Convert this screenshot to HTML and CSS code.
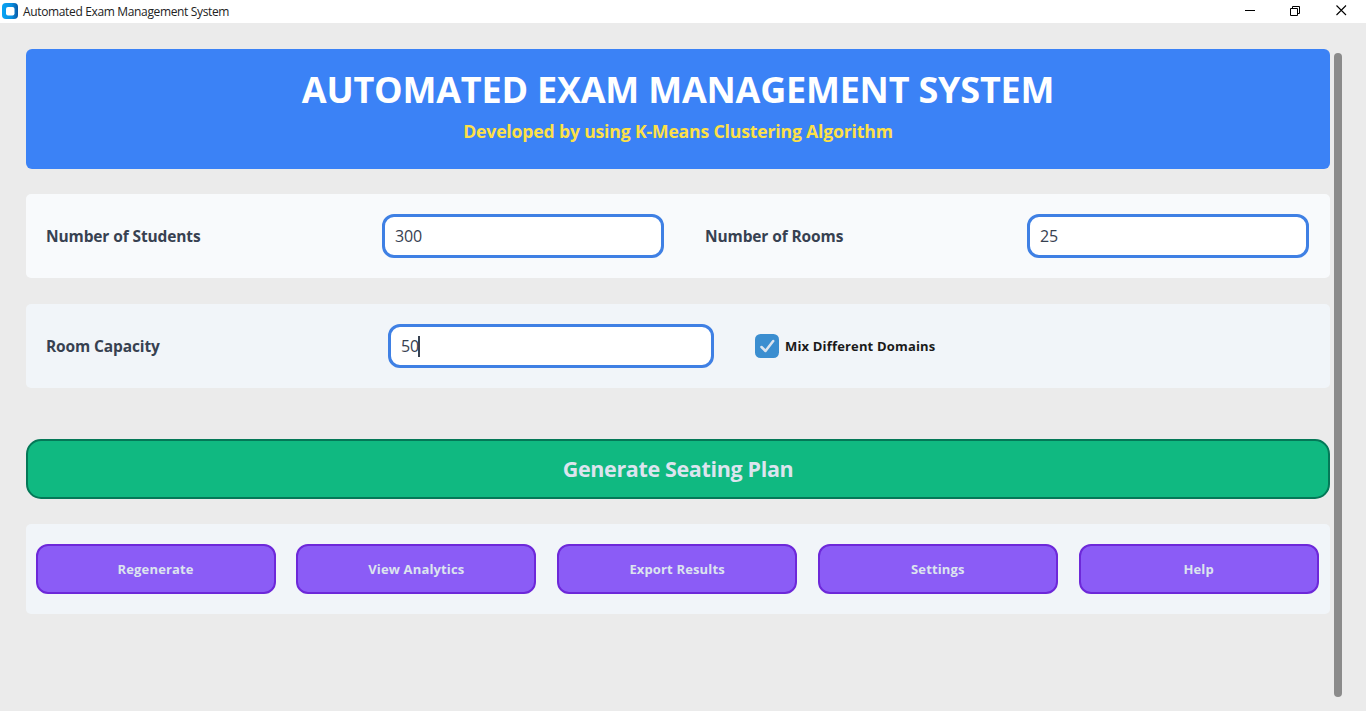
FILE: index.html
```html
<!DOCTYPE html>
<html lang="en">
<head>
<meta charset="utf-8">
<title>Automated Exam Management System</title>
<link rel="stylesheet" href="styles.css">
</head>
<body>
<header class="titlebar">
  <svg class="app-icon" width="16" height="16" viewBox="0 0 16 16">
    <defs><linearGradient id="g" x1="0" x2="1" y1="0" y2="0"><stop offset="0" stop-color="#08a4f4"/><stop offset=".6" stop-color="#098fe0"/><stop offset="1" stop-color="#0959a5"/></linearGradient></defs>
    <rect width="16" height="16" rx="4" fill="url(#g)"/>
    <rect x="4" y="4" width="8.5" height="8.5" rx="2" fill="#fff"/>
  </svg>
  <span class="window-title">Automated Exam Management System</span>
  <svg class="window-controls" width="103" height="12" viewBox="0 0 103 12" fill="none" stroke="#000">
    <path d="M0 6.500h10M45.500 4.500h7v7h-7zM47.500 4.500v-2h7v7h-2"/>
    <path d="M91.500 1.500l9.500 9.500M101 1.500l-9.500 9.500" stroke-width="1.100"/>
  </svg>
</header>
<div class="window">
  <main class="content">
    <section class="banner">
      <h1 class="banner-title">AUTOMATED EXAM MANAGEMENT SYSTEM</h1>
      <p class="banner-sub">Developed by using K-Means Clustering Algorithm</p>
    </section>
    <section class="panel panel-counts">
      <label class="label">Number of Students</label>
      <div class="entry">300</div>
      <label class="label label-rooms">Number of Rooms</label>
      <div class="entry">25</div>
    </section>
    <section class="panel panel-capacity">
      <label class="label">Room Capacity</label>
      <div class="entry">50<span class="caret"></span></div>
      <div class="check">
        <svg width="24" height="24" viewBox="0 0 24 24"><rect width="24" height="24" rx="5.500" fill="#3b8ed0"/><path d="M6.500 13l4 4L18.200 7" fill="none" stroke="#dce4ee" stroke-width="2.500" stroke-linecap="round" stroke-linejoin="round"/></svg>
        <span class="check-text">Mix Different Domains</span>
      </div>
    </section>
    <button class="generate">Generate Seating Plan</button>
    <section class="panel actions">
      <button class="action">Regenerate</button>
      <button class="action">View Analytics</button>
      <button class="action">Export Results</button>
      <button class="action">Settings</button>
      <button class="action">Help</button>
    </section>
  </main>
  <div class="scrollbar"></div>
</div>
</body>
</html>
```
FILE: styles.css
```css
* { box-sizing: border-box; }
body {
  margin: 0;
  height: 711px;
  overflow: hidden;
  display: flex;
  flex-direction: column;
  background: #ebebeb;
  font-family: "Open Sans", "Noto Sans", sans-serif;
}
button { font-family: inherit; padding: 0; }
.titlebar {
  height: 23px;
  background: #fff;
  display: flex;
  align-items: center;
  padding: 0 18px 0 2px;
}
.app-icon { margin-top: -1px; }
.window-title {
  font-size: 12px;
  line-height: 22px;
  margin-left: 5px;
  color: #222;
  letter-spacing: -0.35px;
  white-space: nowrap;
}
.window-controls { margin: -3px 0 0 auto; }
.window {
  flex: 1;
  display: flex;
  gap: 4px;
  padding: 26px 24px 14px 26px;
}
.content { width: 1304px; }
.scrollbar {
  width: 8px;
  margin-top: 4px;
  border-radius: 4px;
  background: #8b8b8b;
}
.banner {
  height: 120px;
  border-radius: 6px;
  background: #3b82f6;
  text-align: center;
  padding-top: 16px;
}
.banner-title {
  margin: 0;
  font-size: 36px;
  line-height: 50px;
  font-weight: 700;
  letter-spacing: -0.22px;
  color: #fff;
  white-space: nowrap;
}
.banner-sub {
  margin: 3px 0 0;
  font-size: 17.6px;
  line-height: 26px;
  font-weight: 700;
  letter-spacing: -0.16px;
  color: #fde047;
}
.panel { border-radius: 5px; display: grid; align-items: center; }
.panel-counts {
  height: 84px;
  margin-top: 25px;
  padding: 0 21px 0 20px;
  grid-template-columns: 336px 282px 363px 282px;
  background: #f8fafc;
}
.panel-capacity {
  height: 84px;
  margin-top: 26px;
  padding: 0 20px;
  grid-template-columns: 342px 326px 1fr;
  background: #f1f5f9;
}
.label {
  font-size: 15.5px;
  line-height: 22px;
  font-weight: 700;
  letter-spacing: -0.12px;
  color: #374151;
  white-space: nowrap;
}
.label-rooms { padding-left: 41px; }
.entry {
  height: 44px;
  border: 3px solid #3f80e4;
  border-radius: 12px;
  background: #fff;
  padding: 0 10px;
  display: flex;
  align-items: center;
  font-size: 16px;
  letter-spacing: -0.2px;
  color: #374151;
}
.caret { width: 2px; height: 21px; margin-left: -1px; background: #374151; }
.check { display: flex; align-items: center; gap: 6px; padding-left: 41px; }
.check-text {
  font-size: 13px;
  font-weight: 700;
  letter-spacing: 0.17px;
  color: #1a1a1a;
  white-space: nowrap;
}
.generate {
  display: block;
  width: 100%;
  height: 60px;
  margin-top: 51px;
  padding-bottom: 1px;
  border: 2px solid #047857;
  border-radius: 15px;
  background: #10b981;
  color: #dce4ee;
  font-size: 21.5px;
  font-weight: 700;
  letter-spacing: -0.35px;
}
.actions {
  height: 90px;
  margin-top: 25px;
  padding: 0 11.4px 0 9.6px;
  grid-template-columns: repeat(5, 240px);
  justify-content: space-between;
  background: #f1f5f9;
}
.action {
  height: 50px;
  border: 2px solid #6d28d9;
  border-radius: 12px;
  background: #8b5cf6;
  color: #dce4ee;
  font-size: 13px;
  font-weight: 700;
  letter-spacing: 0.15px;
}
```
